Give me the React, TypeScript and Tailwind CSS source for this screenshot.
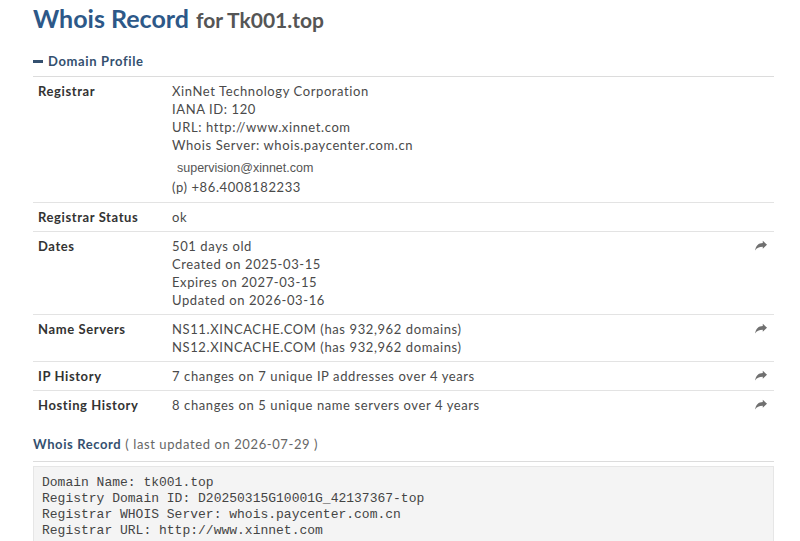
import React from 'react';

const ShareIcon = () => (
  <svg viewBox="0 0 16 14" className="w-[13px] h-[12px] text-[#707070]" fill="currentColor">
    <path d="M15.6 5.2 10.8 0.6v2.6C5.6 3.3 2.3 6.2 1.4 12.4c1.9-3.2 4.8-4.6 9.4-4.6v2.6l4.8-4.6a.8.8 0 0 0 0-1.2z" />
  </svg>
);

const rows: { label: string; lines: React.ReactNode[]; share?: boolean }[] = [
  { label: 'Registrar Status', lines: ['ok'] },
  {
    label: 'Dates',
    lines: ['501 days old', 'Created on 2025-03-15', 'Expires on 2027-03-15', 'Updated on 2026-03-16'],
    share: true,
  },
  {
    label: 'Name Servers',
    lines: ['NS11.XINCACHE.COM (has 932,962 domains)', 'NS12.XINCACHE.COM (has 932,962 domains)'],
    share: true,
  },
  { label: 'IP History', lines: ['7 changes on 7 unique IP addresses over 4 years'], share: true },
  { label: 'Hosting History', lines: ['8 changes on 5 unique name servers over 4 years'], share: true },
];

const whoisText = `Domain Name: tk001.top
Registry Domain ID: D20250315G10001G_42137367-top
Registrar WHOIS Server: whois.paycenter.com.cn
Registrar URL: http://www.xinnet.com
Updated Date: 2026-03-16T02:03:09Z`;

export default function App() {
  return (
    <div className="w-[800px] h-[541px] overflow-hidden bg-white font-['Lato','Noto_Sans',sans-serif] text-[13px]">
      <div className="pl-[33px] pr-[26px]">
        {/* Title */}
        <h1 className="pt-[4px] leading-[28px] font-bold">
          <span className="text-[25px] text-[#2d5888]">Whois Record</span>
          <span className="ml-[7px] text-[21px] text-[#555555]">for Tk001.top</span>
        </h1>

        {/* Domain Profile */}
        <div className="mt-[15px] flex items-center gap-[5px] pb-[6px] border-b border-[#dcdcdc] text-[#34506f] font-bold tracking-[0.65px]">
          <span className="inline-block w-[10px] h-[3px] bg-[#34506f]" />
          <span className="leading-[18px]">Domain Profile</span>
        </div>

        <div className="text-[#4a4a4a] tracking-[0.6px]">
          {/* Registrar */}
          <div className="flex py-[5px] border-b border-[#e3e3e3]">
            <div className="w-[139px] pl-[5px] font-bold text-[#333333] leading-[18px]">Registrar</div>
            <div className="flex-1">
              <div className="leading-[18px]">XinNet Technology Corporation</div>
              <div className="leading-[18px]">IANA ID: 120</div>
              <div className="leading-[18px]">URL: http://www.xinnet.com</div>
              <div className="leading-[18px]">Whois Server: whois.paycenter.com.cn</div>
              <div className="pt-[5px] pl-[5px] leading-[18px] text-[12.5px] tracking-normal font-['Liberation_Sans',sans-serif] text-[#555555]">
                supervision@xinnet.com
              </div>
              <div className="leading-[20px]">(p) +86.4008182233</div>
            </div>
          </div>

          {rows.map((r, i) => (
            <div
              key={r.label}
              className={`flex py-[5px] ${i < rows.length - 1 ? 'border-b border-[#e3e3e3]' : ''}`}
            >
              <div className="w-[139px] pl-[5px] font-bold text-[#333333] leading-[18px]">{r.label}</div>
              <div className="flex-1">
                {r.lines.map((l, j) => (
                  <div key={j} className="leading-[18px]">
                    {l}
                  </div>
                ))}
              </div>
              <div className="w-[20px] pt-[3px]">{r.share && <ShareIcon />}</div>
            </div>
          ))}
        </div>

        {/* Whois Record */}
        <div className="mt-[16px] pb-[8px] border-b border-[#dcdcdc] leading-[18px] tracking-[0.6px]">
          <span className="font-bold text-[#34506f]">Whois Record</span>{' '}
          <span className="text-[#666666]">( last updated on 2026-07-29 )</span>
        </div>

        <pre className="mt-[4px] bg-[#f4f4f4] border border-[#e6e6e6] px-[8px] pt-[8px] pb-[8px] font-['Liberation_Mono','DejaVu_Sans_Mono',monospace] text-[13px] leading-[16px] text-[#444444]">
          {whoisText}
        </pre>
      </div>
    </div>
  );
}
